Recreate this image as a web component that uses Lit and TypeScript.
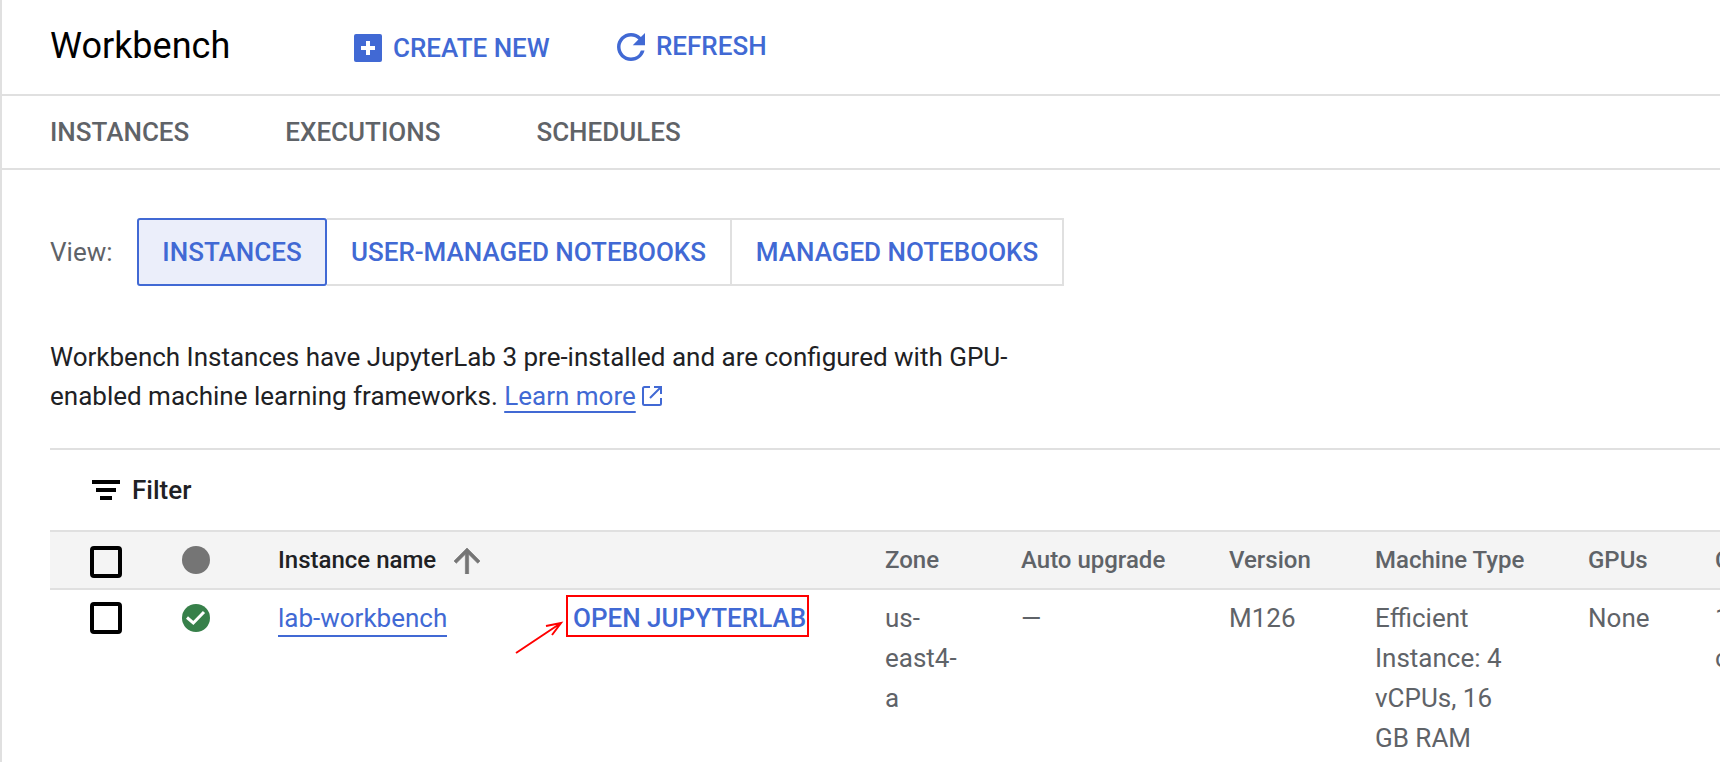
import { LitElement, html, css } from "lit";
import { customElement } from "lit/decorators.js";

@customElement("app-root")
export class AppRoot extends LitElement {
  static styles = css`
    :host { display: block; width: 1720px; height: 762px; overflow: hidden; position: relative; background: #fff; font-family: Roboto, "Liberation Sans", sans-serif; color: #202124; border-left: 2px solid #e0e0e0; box-sizing: border-box; }
    .head { height: 94px; display: flex; align-items: center; padding-left: 48px; border-bottom: 2px solid #e0e0e0; }
    .title { font-size: 36px; color: #000; width: 304px; padding-bottom: 2px; }
    .action { display: flex; align-items: center; color: #4169d4; font-size: 26px; font-weight: 500; }
    .create { gap: 11px; width: 263px; padding-top: 2px; }
    .refresh { gap: 11px; }
    .refresh span { margin-top: -2px; }
    .tabs { height: 72px; display: flex; align-items: center; gap: 96px; padding-left: 48px; border-bottom: 2px solid #e0e0e0; font-size: 26px; font-weight: 500; color: #5f6368; }
    .main { padding: 48px 0 0 48px; }
    .view { display: flex; align-items: center; height: 68px; font-size: 26px; color: #5f6368; }
    .view-label { width: 87px; }
    .seg { height: 68px; box-sizing: border-box; display: flex; align-items: center; justify-content: center; border: 2px solid #e0e0e0; border-left: 0; font-size: 26px; font-weight: 500; color: #4169d4; }
    .seg.on { background: #ebeefa; border: 2px solid #4169d4; border-radius: 3px; width: 190px; }
    .seg.b { width: 405px; }
    .seg.c { width: 332px; }
    .desc { margin-top: 52px; width: 1000px; font-size: 26px; line-height: 39px; color: #202124; padding-bottom: 32px; }
    .learn { color: #4169d4; text-decoration: underline; text-decoration-thickness: 2px; text-underline-offset: 6px; }
    .link { color: #4169d4; border-bottom: 2px solid #4169d4; padding-bottom: 2px; }
    .ext { display: inline-block; vertical-align: -1px; margin-left: 6px; }
    .table-wrap { margin-left: 48px; }
    .rule { border-top: 2px solid #e0e0e0; }
    .filter { height: 80px; display: flex; align-items: center; gap: 12px; padding-left: 42px; font-size: 26px; font-weight: 500; color: #202124; }
    .row { display: grid; grid-template-columns: 132px 96px 607px 136px 208px 146px 213px 127px 200px; width: 1900px; font-size: 26px; }
    .hrow { background: #f4f4f4; border-top: 2px solid #e0e0e0; border-bottom: 2px solid #e0e0e0; height: 56px; align-items: center; font-size: 24px; font-weight: 500; color: #5f6368; }
    .brow { line-height: 40px; color: #5f6368; padding-top: 8px; align-items: start; }
    .cb { width: 32px; height: 32px; border: 4px solid #000; border-radius: 4px; box-sizing: border-box; margin-left: 40px; }
    .hrow .cb { margin-top: 4px; }
    .brow .cb { margin-top: 4px; }
    .hname { color: #202124; display: flex; align-items: center; gap: 18px; }
    .sort { margin-top: 2px; }
    .dot { width: 28px; height: 28px; border-radius: 50%; background: #757575; display: block; }
    .ok { margin-top: 6px; }
    .namecell { display: flex; }
    .name { width: 295px; }
    .open { color: #4169d4; font-weight: 500; white-space: nowrap; }
    .box { position: absolute; left: 564px; top: 595px; width: 243px; height: 42px; box-sizing: border-box; border: 2.5px solid #f00; }
    .arrow { position: absolute; left: 510px; top: 615px; }
    svg { display: block; flex: none; }
    svg.ext { display: inline-block; }
  `;

  render() {
    return html`
      <div class="head">
        <div class="title">Workbench</div>
        <div class="action create">
          <svg width="28" height="28" viewBox="0 0 28 28"><rect width="28" height="28" rx="2" fill="#4169d4"/><path d="M12 7h4v5h5v4h-5v5h-4v-5H7v-4h5z" fill="#fff"/></svg>
          <span>CREATE NEW</span>
        </div>
        <div class="action refresh">
          <svg width="28" height="28" viewBox="4 4 16 16"><path d="M17.65 6.35A7.958 7.958 0 0 0 12 4c-4.42 0-7.99 3.58-7.99 8s3.57 8 7.99 8c3.73 0 6.84-2.55 7.73-6h-2.08A5.99 5.99 0 0 1 12 18c-3.31 0-6-2.69-6-6s2.69-6 6-6c1.66 0 3.14.69 4.22 1.78L13 11h7V4l-2.35 2.35z" fill="#4169d4"/></svg>
          <span>REFRESH</span>
        </div>
      </div>
      <div class="tabs"><span>INSTANCES</span><span>EXECUTIONS</span><span>SCHEDULES</span></div>
      <div class="main">
        <div class="view">
          <div class="view-label">View:</div>
          <div class="seg on">INSTANCES</div>
          <div class="seg b">USER-MANAGED NOTEBOOKS</div>
          <div class="seg c">MANAGED NOTEBOOKS</div>
        </div>
        <div class="desc">Workbench Instances have JupyterLab 3 pre-installed and are configured with GPU-enabled machine learning frameworks. <span class="learn">Learn more</span><svg class="ext" width="20" height="20" viewBox="0 0 20 20"><path d="M8 1H2.5A1.5 1.5 0 0 0 1 2.500v15A1.500 1.500 0 0 0 2.500 19h15a1.500 1.500 0 0 0 1.500-1.500V12M12 1h7v7M19 1 8 12" fill="none" stroke="#4169d4" stroke-width="2"/></svg></div>
      </div>
      <div class="table-wrap">
        <div class="rule"></div>
        <div class="filter">
          <svg width="28" height="20" viewBox="0 0 28 20"><path d="M0 0h28v4H0zM4 8h20v4H4zM8 16h12v4H8z" fill="#000"/></svg>
          Filter
        </div>
        <div class="row hrow">
          <div class="cb"></div>
          <span class="dot"></span>
          <div class="hname">Instance name
            <svg class="sort" width="26" height="26" viewBox="4 4 16 16"><path d="M4 12l1.410 1.410L11 7.830V20h2V7.830l5.580 5.590L20 12l-8-8-8 8z" fill="#757575" stroke="#757575" stroke-width="0.4"/></svg>
          </div>
          <div>Zone</div><div>Auto upgrade</div><div>Version</div><div>Machine Type</div><div>GPUs</div><div>Created</div>
        </div>
        <div class="row brow">
          <div class="cb"></div>
          <svg class="ok" width="28" height="28" viewBox="0 0 28 28"><circle cx="14" cy="14" r="14" fill="#37804a"/><path d="M5 13.500 11.300 19 22 8" fill="none" stroke="#fff" stroke-width="3"/></svg>
          <div class="namecell"><div class="name"><span class="link">lab-workbench</span></div><div class="open">OPEN JUPYTERLAB</div></div>
          <div>us-<br>east4-<br>a</div><div>—</div><div>M126</div><div>Efficient<br>Instance: 4<br>vCPUs, 16<br>GB RAM</div><div>None</div><div>1<br>c</div>
        </div>
      </div>
      <div class="box"></div>
      <svg class="arrow" width="60" height="44" viewBox="0 0 60 44"><path d="M4 38 49 8M34 11 49 8 40 20" fill="none" stroke="#f00" stroke-width="2"/></svg>
    `;
  }
}
